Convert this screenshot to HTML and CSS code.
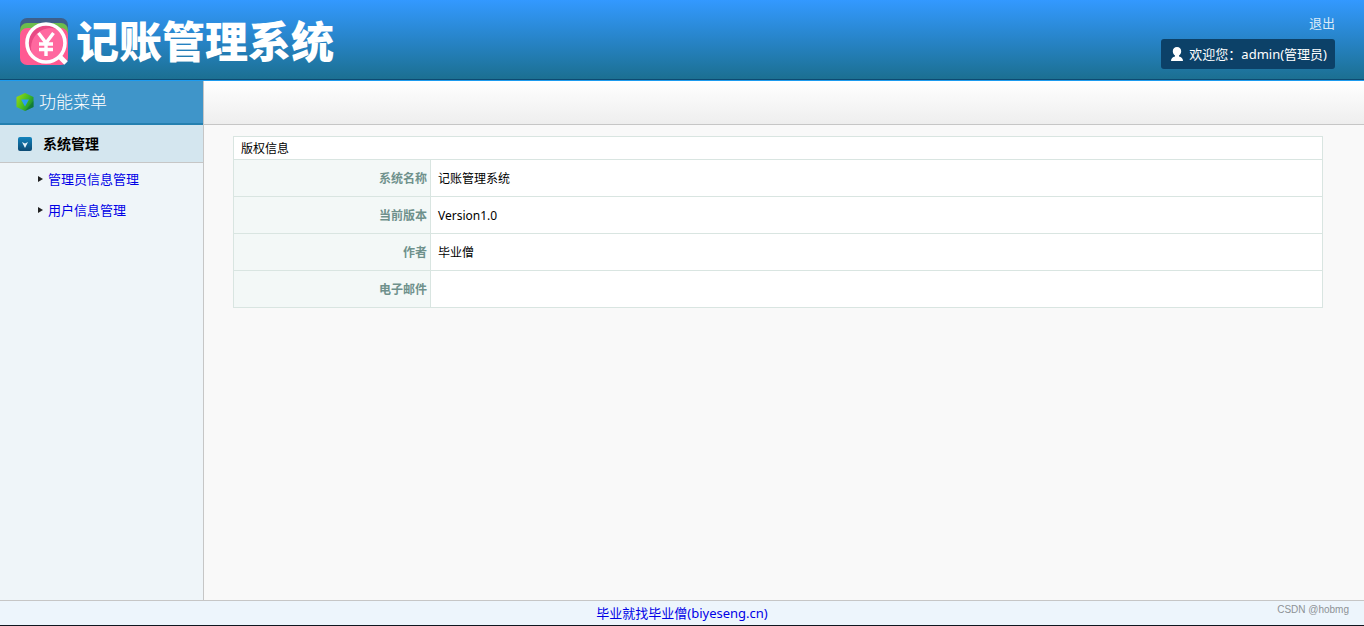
FILE: index.html
```html
<!DOCTYPE html>
<html lang="zh-CN">
<head>
    <meta charset="UTF-8">
    <meta name="viewport" content="width=device-width, initial-scale=1.0">
    <title>记账管理系统</title>
    <link rel="stylesheet" href="styles.css">
</head>
<body>

    <header class="header">
        <div class="logo">
            <svg class="logo__icon" viewBox="0 0 49 49" aria-hidden="true">
                <defs>
                    <clipPath id="lens"><circle cx="26" cy="25" r="19"/></clipPath>
                </defs>
                <rect width="48" height="34" rx="7" fill="#3d5f8a"/>
                <rect y="5" width="48" height="34" rx="7" fill="#6cbd4c"/>
                <rect y="10" width="48" height="37" rx="7" fill="#ff5a92"/>
                <circle cx="26" cy="25" r="19" fill="#e84a85"/>
                <circle cx="31" cy="30" r="20" fill="#ff689f" clip-path="url(#lens)"/>
                <circle cx="26" cy="25" r="19" fill="none" stroke="#fff" stroke-width="3.6"/>
                <path d="M39 38l7 7" stroke="#fff" stroke-width="5"/>
                <path d="M18.500 15l7.500 10 7.500-10M26 25v13M19 26h14M19 31.500h14" fill="none" stroke="#fff" stroke-width="3.4"/>
            </svg>
            <h1 class="logo__title">记账管理系统</h1>
        </div>
        <div class="account">
            <a href="#" class="account__logout">退出</a>
            <div class="account__user">
                <svg class="account__icon" viewBox="0 0 12 14" aria-hidden="true">
                    <path d="M6 0c2.600 0 4.200 1.800 4.200 4.200 0 1.900-.9 3.500-2.200 4.300v1c2.400.6 4 1.800 4 4.500H0c0-2.700 1.600-3.900 4-4.500v-1C2.700 7.700 1.800 6.100 1.800 4.200 1.800 1.800 3.400 0 6 0z" fill="#fff"/>
                </svg>
                <span>欢迎您：admin(管理员)</span>
            </div>
        </div>
    </header>

    <div class="content">
        <nav class="sidebar">
            <h2 class="sidebar__title">
                <svg class="sidebar__logo" viewBox="0 0 18 18" aria-hidden="true">
                    <defs>
                        <linearGradient id="hex" x1="0" y1="0" x2="1" y2="0.600">
                            <stop offset="0" stop-color="#a4dc10"/>
                            <stop offset="0.600" stop-color="#45bd22"/>
                            <stop offset="1" stop-color="#158a36"/>
                        </linearGradient>
                    </defs>
                    <path d="M9 0l8.500 4v10L9 18 .5 14V4z" fill="url(#hex)"/>
                    <path d="M9 18l8.500-4V8z" fill="#0a6a3a" opacity=".5"/>
                    <path d="M5 6.500h8L9 13.500z" fill="#2b9df0"/>
                </svg>
                功能菜单
            </h2>
            <h3 class="sidebar__group">
                <svg class="sidebar__toggle" viewBox="0 0 14 14" aria-hidden="true">
                    <defs>
                        <linearGradient id="box" x1="0" y1="0" x2="0" y2="1">
                            <stop offset="0" stop-color="#1283bd"/>
                            <stop offset="1" stop-color="#0c4a73"/>
                        </linearGradient>
                    </defs>
                    <rect width="14" height="14" rx="2" fill="url(#box)"/>
                    <path d="M4 5l3 1.500L10 5l-3 6z" fill="#e4f2fa"/>
                </svg>
                系统管理
            </h3>
            <ul class="menu">
                <li class="menu__item"><a href="#">管理员信息管理</a></li>
                <li class="menu__item"><a href="#">用户信息管理</a></li>
            </ul>
        </nav>

        <main class="main">
            <div class="toolbar"></div>
            <div class="panel">
                <table class="info">
                    <thead>
                        <tr><th colspan="2" class="info__title">版权信息</th></tr>
                    </thead>
                    <tbody>
                        <tr><th scope="row">系统名称</th><td>记账管理系统</td></tr>
                        <tr><th scope="row">当前版本</th><td>Version1.0</td></tr>
                        <tr><th scope="row">作者</th><td>毕业僧</td></tr>
                        <tr><th scope="row">电子邮件</th><td></td></tr>
                    </tbody>
                </table>
            </div>
        </main>
    </div>

    <footer class="footer">
        <span></span>
        <a href="#">毕业就找毕业僧(biyeseng.cn)</a>
        <span class="footer__mark">CSDN @hobmg</span>
    </footer>

</body>
</html>
```
FILE: styles.css
```css
* {
    margin: 0;
    padding: 0;
    box-sizing: border-box;
}

body {
    display: flex;
    flex-direction: column;
    min-height: 100vh;
    font-family: "Noto Sans", "Noto Sans CJK SC", sans-serif;
    font-size: 13px;
    line-height: 18px;
    color: #000;
    background: #f9f9f9;
}

a {
    color: #0000e6;
    text-decoration: none;
}

a:hover {
    text-decoration: underline;
}

/* header */
.header {
    display: flex;
    justify-content: space-between;
    height: 81px;
    padding: 0 29px 0 20px;
    background: linear-gradient(#3399ff, #1b6f90);
    border-bottom: 1px solid #1c9bef;
    box-shadow: inset 0 -1px #0d4a72;
}

.logo {
    display: flex;
    align-items: center;
    gap: 7px;
    padding-top: 4px;
}

.logo__icon {
    width: 49px;
    height: 49px;
}

.logo__title {
    font-size: 43px;
    font-weight: 900;
    line-height: 60px;
    color: #fff;
}

.account {
    display: flex;
    flex-direction: column;
    align-items: flex-end;
    gap: 7px;
    padding-top: 14px;
}

.account__logout {
    color: #dcebf8;
}

.account__user {
    display: flex;
    align-items: center;
    gap: 6px;
    height: 30px;
    padding: 0 8px 0 10px;
    color: #fff;
    background: #0c4168;
    border-radius: 3px;
}

.account__icon {
    width: 12px;
    height: 14px;
}

/* layout */
.content {
    display: flex;
    flex: 1;
}

.sidebar {
    width: 204px;
    background: #eff5f9;
    border-right: 1px solid #c6c6c6;
}

.sidebar__title {
    display: flex;
    align-items: center;
    gap: 5px;
    height: 44px;
    padding-left: 16px;
    font-size: 17px;
    font-weight: 300;
    color: #fff;
    background: #3f95c9;
    border-bottom: 2px solid #2480b0;
}

.sidebar__logo {
    width: 18px;
    height: 18px;
}

.sidebar__group {
    display: flex;
    align-items: center;
    gap: 11px;
    height: 38px;
    padding-left: 18px;
    font-size: 14px;
    font-weight: bold;
    background: #d4e6ef;
    border-bottom: 1px solid #c6c6c6;
}

.sidebar__toggle {
    width: 14px;
    height: 14px;
}

.menu {
    list-style: none;
}

.menu__item {
    display: flex;
    align-items: center;
    gap: 5px;
    height: 31px;
    padding-left: 38px;
}

.menu__item::before {
    content: "";
    border: 3px solid transparent;
    border-left: 5px solid #222;
    border-right: 0;
}

.main {
    flex: 1;
}

.toolbar {
    height: 44px;
    background: linear-gradient(#ffffff, #eeeeee);
    border-bottom: 1px solid #c6c6c6;
}

.panel {
    padding: 11px 41px 11px 29px;
}

/* copyright table */
.info {
    width: 100%;
    border-collapse: collapse;
    font-size: 12px;
    background: #fff;
}

.info th,
.info td {
    height: 37px;
    padding-top: 2px;
    border: 1px solid #d9e5e1;
}

.info th {
    width: 197px;
    padding-right: 3px;
    text-align: right;
    color: #6f918c;
    background: #f3f8f7;
}

.info td {
    padding-left: 7px;
}

.info .info__title {
    height: 23px;
    padding-left: 7px;
    text-align: left;
    font-weight: normal;
    color: #000;
    background: #fff;
}

/* footer */
.footer {
    display: grid;
    grid-template-columns: 1fr auto 1fr;
    align-items: center;
    height: 26px;
    padding: 0 15px;
    background: #edf5fc;
    border-top: 1px solid #c6c6c6;
    border-bottom: 1px solid #10161f;
}

.footer__mark {
    align-self: start;
    justify-self: end;
    font-family: "Liberation Sans", sans-serif;
    font-size: 10px;
    color: #8d9296;
}
```
